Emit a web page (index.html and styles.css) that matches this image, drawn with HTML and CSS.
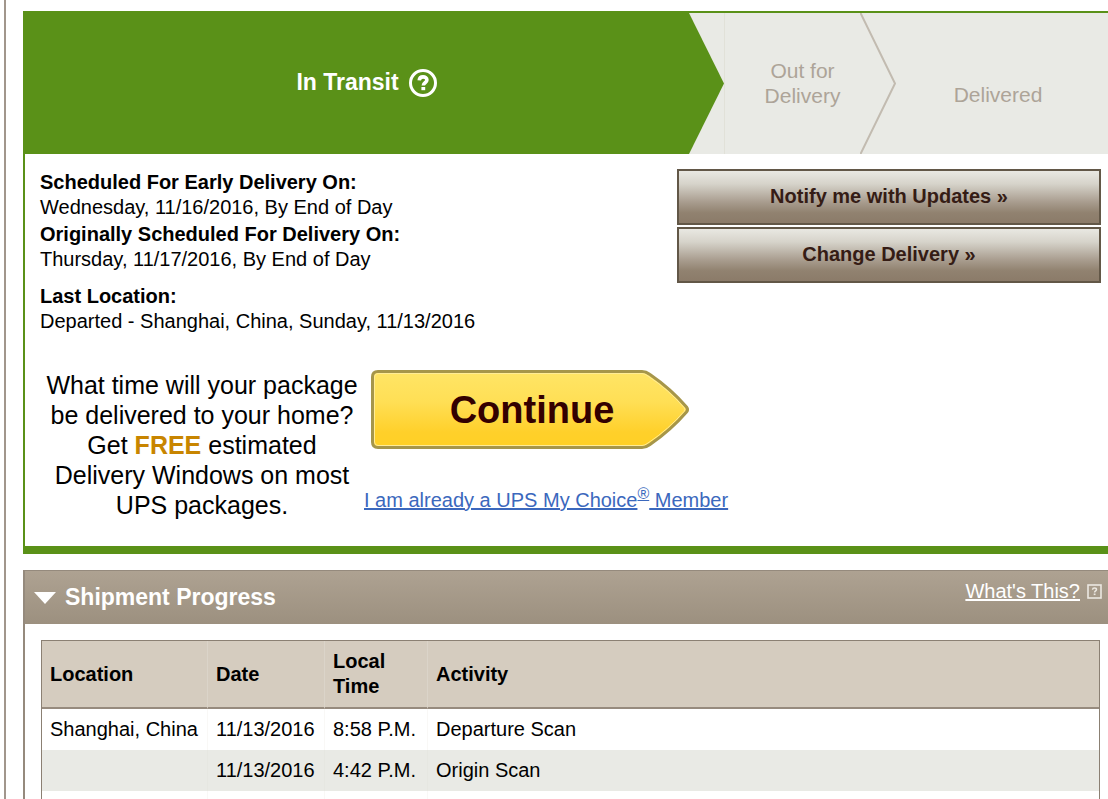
FILE: index.html
```html
<!DOCTYPE html>
<html lang="en">
<head>
  <meta charset="UTF-8" />
  <meta name="viewport" content="width=device-width, initial-scale=1.0" />
  <title>Tracking Detail</title>
  <link rel="stylesheet" href="styles.css">
</head>
<body>
  <div class="page">
    <section class="status">
      <div class="track">
        <div class="step current">
          <span>In Transit</span>
          <svg class="help" viewBox="0 0 28 28" role="img" aria-label="Help">
            <circle cx="14" cy="14" r="12.5" fill="none" stroke="#fff" stroke-width="3" />
            <path d="M10.2 11.400c.2-2.200 1.600-3.500 3.800-3.500s3.900 1.200 3.900 3.100c0 2.700-3.600 2.800-3.600 5.500" fill="none" stroke="#fff" stroke-width="3.6" />
            <rect x="12.400" y="18" width="3.800" height="3.200" fill="#fff" />
          </svg>
        </div>
        <div class="step out">
          <span>Out for<br>Delivery</span>
          <svg class="chevron" viewBox="0 0 36 141" preserveAspectRatio="none" aria-hidden="true">
            <path d="M0.5 0L35 70.5L0.5 141" fill="none" stroke="#c2bbb0" stroke-width="2" />
          </svg>
        </div>
        <div class="step delivered"><span>Delivered</span></div>
      </div>

      <div class="details">
        <dl class="dates">
          <dt>Scheduled For Early Delivery On:</dt>
          <dd>Wednesday, 11/16/2016, By End of Day</dd>
          <dt>Originally Scheduled For Delivery On:</dt>
          <dd>Thursday, 11/17/2016, By End of Day</dd>
          <dt class="last">Last Location:</dt>
          <dd>Departed - Shanghai, China, Sunday, 11/13/2016</dd>
        </dl>
        <div class="actions">
          <button type="button" class="action">Notify me with Updates »</button>
          <button type="button" class="action">Change Delivery »</button>
        </div>
      </div>

      <div class="promo">
        <p class="promo-text">What time will your package<br>be delivered to your home?<br>Get <strong>FREE</strong> estimated<br>Delivery Windows on most<br>UPS packages.</p>
        <div class="promo-side">
          <button type="button" class="continue">
            <svg viewBox="0 0 318 79" aria-hidden="true">
              <defs>
                <linearGradient id="gold" x1="0" y1="0" x2="0" y2="1">
                  <stop offset="0" stop-color="#ffe566" />
                  <stop offset="0.4" stop-color="#ffdf55" />
                  <stop offset="0.8" stop-color="#ffd02a" />
                  <stop offset="1" stop-color="#ffd025" />
                </linearGradient>
              </defs>
              <path d="M7 1.5H271Q275 1.5 279 4.5Q300 19 315.500 37Q317.500 39.500 315.500 42Q300 60 279 74.500Q275 77.500 271 77.500H7Q1.500 77.500 1.500 72V7Q1.500 1.500 7 1.500Z" fill="url(#gold)" stroke="#a6964a" stroke-width="3" />
              <path d="M7 3.500H271Q274 3.500 277 6Q298 20 313 37.500Q314.500 39.500 313 41.500Q298 59 277 73Q274 75.500 271 75.500H7Q3.500 75.500 3.500 72V7Q3.500 3.500 7 3.500Z" fill="none" stroke="#ffec96" stroke-width="1" />
            </svg>
            <span>Continue</span>
          </button>
          <a class="member" href="#">I am already a UPS My Choice<sup>®</sup> Member</a>
        </div>
      </div>
    </section>

    <section class="progress">
      <header class="progress-head">
        <h2>
          <svg class="arrow" viewBox="0 0 22 12" aria-hidden="true"><path d="M0 0H22L11 12Z" fill="#fff" /></svg>
          Shipment Progress
        </h2>
        <div class="whats">
          <a href="#">What's This?</a>
          <svg class="box" viewBox="0 0 15 15" aria-hidden="true">
            <rect x="1" y="1" width="13" height="13" fill="none" stroke="#ece8e1" stroke-width="1.6" />
            <path d="M5.500 5.700c.1-1.200.9-1.700 2-1.700s2 .5 2 1.500c0 1.300-1.900 1.400-1.900 2.900" fill="none" stroke="#ece8e1" stroke-width="1.5" />
            <rect x="6.700" y="9.500" width="1.800" height="1.600" fill="#ece8e1" />
          </svg>
        </div>
      </header>
      <div class="table-wrap">
        <table>
          <thead>
            <tr>
              <th class="col-location">Location</th>
              <th class="col-date">Date</th>
              <th class="col-time">Local Time</th>
              <th>Activity</th>
            </tr>
          </thead>
          <tbody>
            <tr><td>Shanghai, China</td><td>11/13/2016</td><td>8:58 P.M.</td><td>Departure Scan</td></tr>
            <tr><td></td><td>11/13/2016</td><td>4:42 P.M.</td><td>Origin Scan</td></tr>
            <tr><td></td><td></td><td></td><td></td></tr>
          </tbody>
        </table>
      </div>
    </section>
  </div>
</body>
</html>
```
FILE: styles.css
```css
* { box-sizing: border-box; margin: 0; padding: 0; }
body {
  font-family: "Liberation Sans", Arial, sans-serif;
  font-size: 20px;
  line-height: 25px;
  color: #000;
  background: #fff;
}
.page {
  margin-left: 4px;
  padding: 11px 0 0 17px;
  border-left: 2px solid #a1968c;
}

/* status panel */
.status {
  border: 2px solid #5a9118;
  border-right: none;
  border-bottom-width: 8px;
}
.track {
  display: flex;
  height: 141px;
  background: #e9eae5;
}
.step {
  display: flex;
  align-items: center;
  justify-content: center;
  padding: 0 16px 2px 0;
  text-align: center;
  font-size: 21px;
  color: #ada498;
}
.current {
  flex: 1;
  gap: 10px;
  background: #5a9118;
  color: #fff;
  font-size: 23px;
  font-weight: bold;
  clip-path: polygon(0 0, calc(100% - 35px) 0, 100% 50%, calc(100% - 35px) 100%, 0 100%);
}
.help { width: 28px; height: 28px; }
.out {
  position: relative;
  width: 172px;
  border-left: 1px solid #e1e1d8;
}
.chevron {
  position: absolute;
  top: 0;
  right: 0;
  width: 36px;
  height: 100%;
}
.delivered {
  width: 212px;
  padding: 22px 8px 0 0;
}
.details {
  display: flex;
  justify-content: space-between;
  padding: 15px 7px 0 15px;
}
.dates { padding-top: 1px; }
.dates dt { font-weight: bold; padding-top: 2px; }
.dates dt:first-child { padding-top: 0; }
.dates .last { padding-top: 12px; }
.actions {
  display: flex;
  flex-direction: column;
  gap: 2px;
  width: 424px;
}
.action {
  height: 56px;
  padding-bottom: 2px;
  border: 2px solid #625747;
  background: linear-gradient(#e9e8e2, #d6d3ca 25%, #a89c8e 60%, #918270 80%, #8b7b69);
  font: bold 20px "Liberation Sans", Arial, sans-serif;
  color: #351c15;
  cursor: pointer;
}
.promo {
  display: flex;
  padding: 36px 16px 26px 15px;
}
.promo-text {
  width: 324px;
  font-size: 25px;
  line-height: 30px;
  text-align: center;
}
.promo-text strong { color: #c88500; }
.promo-side {
  display: flex;
  flex-direction: column;
  align-items: flex-start;
  gap: 39px;
}
.continue {
  position: relative;
  width: 318px;
  height: 79px;
  margin-left: 7px;
  padding: 2px 0 0 4px;
  border: none;
  background: none;
  font: bold 38px "Liberation Sans", Arial, sans-serif;
  color: #330000;
  cursor: pointer;
}
.continue svg {
  position: absolute;
  top: 0;
  left: 0;
  width: 100%;
  height: 100%;
}
.continue span { position: relative; }
.member { color: #3b68bd; }
.member sup {
  display: inline-block;
  font-size: 16px;
  line-height: 0;
  text-decoration: underline;
}

/* shipment progress */
.progress {
  margin-top: 16px;
  border: 2px solid #958a7d;
  border-width: 1px 0 0 2px;
}
.progress-head {
  display: flex;
  justify-content: space-between;
  height: 53px;
  padding: 0 6px 0 9px;
  background: linear-gradient(#aea292, #9c907f);
  color: #fff;
}
.progress-head h2 {
  display: flex;
  align-items: center;
  gap: 9px;
  font-size: 23px;
}
.arrow { width: 22px; height: 12px; }
.whats {
  display: flex;
  align-items: center;
  gap: 7px;
  padding-bottom: 12px;
}
.whats a { color: #fff; }
.box { width: 15px; height: 15px; }
.table-wrap { padding: 16px 8px 0 16px; }
table {
  width: 100%;
  border: 1px solid #8b8073;
  border-bottom: none;
  border-spacing: 0;
}
th, td {
  padding: 8px;
  text-align: left;
  white-space: nowrap;
}
th {
  background: #d5ccbf;
  border-bottom: 2px solid #978b7e;
  white-space: normal;
}
th + th { border-left: 1px solid #dbd4c9; }
td { height: 41px; }
td + td { border-left: 1px solid #f9f8f6; }
tbody tr:nth-child(even) td { background: #e9eae5; }
tbody tr:nth-child(even) td + td { border-left-color: #e6e7e1; }
.col-location { width: 165px; }
.col-date { width: 117px; }
.col-time { width: 103px; }
```
